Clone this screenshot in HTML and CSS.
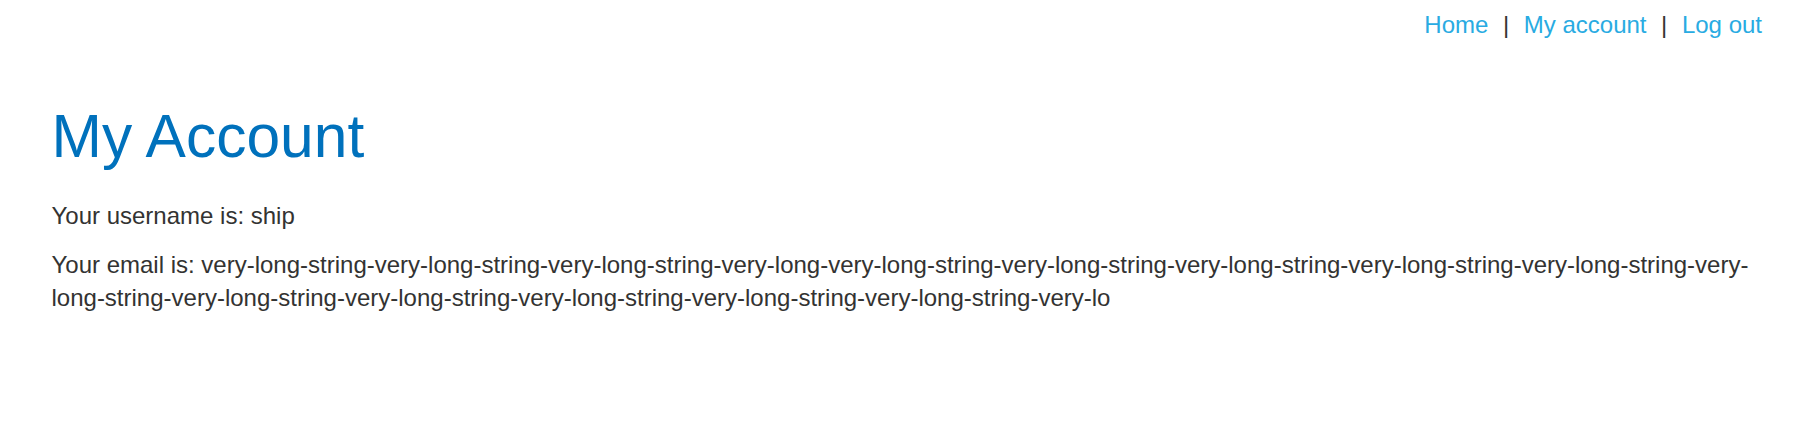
FILE: index.html
```html
<!DOCTYPE html>
<html lang="en">
<head>
<meta charset="utf-8">
<title>My Account</title>
<link rel="stylesheet" href="styles.css">
</head>
<body>
<div class="page">
  <header class="top-nav">
    <a class="nav-link" href="#">Home</a>
    <span class="nav-sep">|</span>
    <a class="nav-link" href="#">My account</a>
    <span class="nav-sep">|</span>
    <a class="nav-link" href="#">Log out</a>
  </header>
  <main class="content">
    <h1 class="title">My Account</h1>
    <p class="info">Your username is: ship</p>
    <p class="info">Your email is: very-long-string-very-long-string-very-long-string-very-long-very-long-string-very-long-string-very-long-string-very-long-string-very-long-string-very-long-string-very-long-string-very-long-string-very-long-string-very-long-string-very-long-string-very-lo</p>
  </main>
</div>
</body>
</html>
```
FILE: styles.css
```css
html, body {
  margin: 0;
  padding: 0;
  background: #ffffff;
}
body {
  font-family: "Liberation Sans", Arial, sans-serif;
  color: #333332;
  font-size: 24px;
  line-height: 33.6px;
}
.page {
  padding: 8px 46px 0 51.5px;
}
.top-nav {
  display: flex;
  justify-content: flex-end;
  align-items: baseline;
}
.nav-link {
  color: #29abe2;
  text-decoration: none;
}
.nav-sep {
  padding: 0 14.6px;
}
.title {
  color: #0071bc;
  font-weight: normal;
  font-size: 60.5px;
  line-height: 66px;
  margin: 61.5px 0 30px 0;
}
.info {
  margin: 0 0 15px 0;
}
```
